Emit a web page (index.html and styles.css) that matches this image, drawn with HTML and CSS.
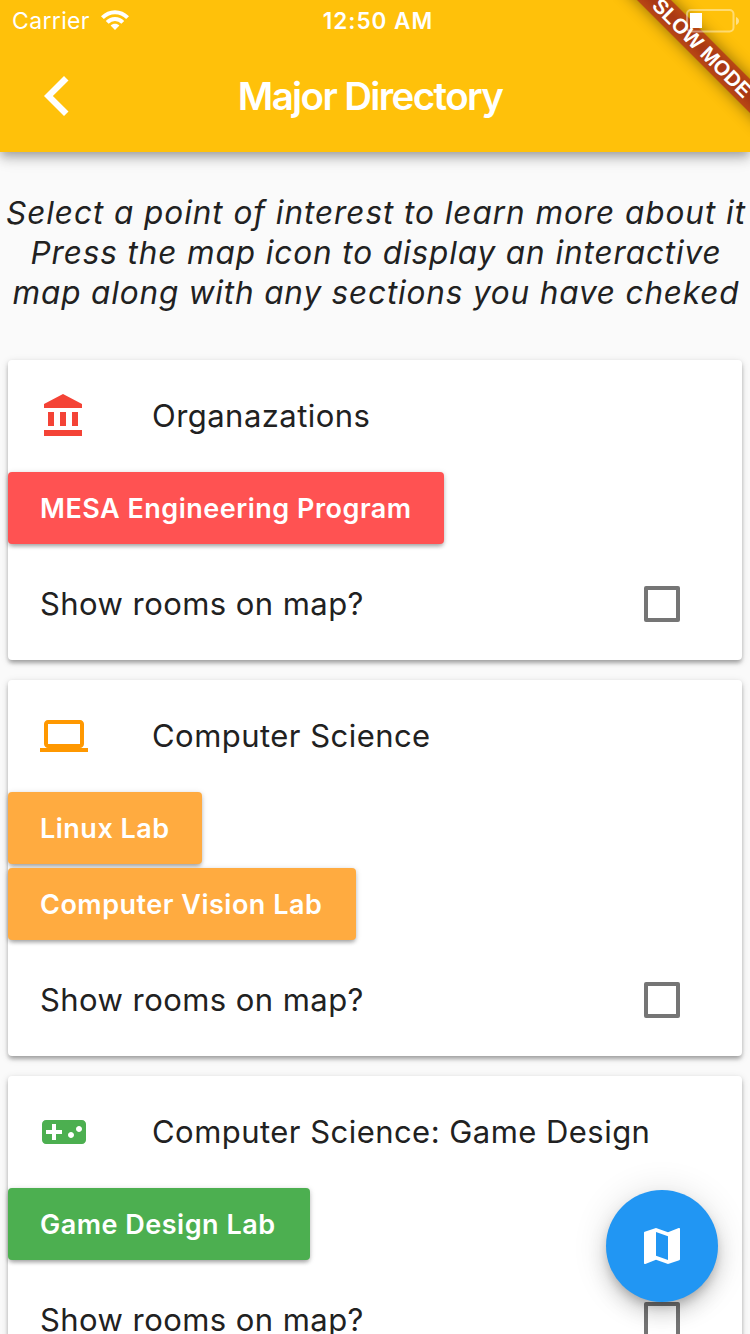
FILE: index.html
```html
<!DOCTYPE html>
<html lang="en">
<head>
<meta charset="utf-8">
<title>Major Directory</title>
<link rel="stylesheet" href="styles.css">
</head>
<body>
<div class="screen">
  <header class="app-bar">
    <div class="status-bar">
      <div class="network">
        <span class="carrier">Carrier</span>
        <svg class="wifi" viewBox="0 0 28 20" width="28" height="20"><g fill="none" stroke="#fff" stroke-width="4"><path d="M1.400 7.700C8.500.3 19.500.3 26.600 7.700"/><path d="M6.200 12.400c4.400-4.500 11.200-4.500 15.600 0"/></g><path d="M9.600 15.600c2.400-2.400 6.400-2.400 8.800 0L14 20z" fill="#fff"/></svg>
      </div>
      <span class="clock">12:50 AM</span>
    </div>
    <div class="toolbar">
      <svg class="back" viewBox="0 0 25 40" width="25" height="40"><path d="M20 0l4.500 4.400L8.900 20l15.600 15.600L20 40 0 20z" fill="#fff"/></svg>
      <h1 class="title">Major Directory</h1>
    </div>
  </header>

  <main class="content">
    <p class="intro"><span class="line-1">Select a point of interest to learn more about it</span><br><span class="line-2">Press the map icon to display an interactive</span><br><span class="line-3">map along with any sections you have cheked</span></p>

    <section class="card">
      <div class="tile">
        <svg class="icon red" viewBox="0 0 24 24"><path d="M4 10v7h3v-7H4zm6 0v7h3v-7h-3zM2 22h19v-3H2v3zm14-12v7h3v-7h-3zM11.500 1L2 6v2h19V6l-9.500-5z"/></svg>
        <h2 class="heading">Organazations</h2>
      </div>
      <div class="buttons">
        <button class="button mesa">MESA Engineering Program</button>
      </div>
      <label class="check-row"><span>Show rooms on map?</span><span class="checkbox"></span></label>
    </section>

    <section class="card">
      <div class="tile">
        <svg class="icon orange" viewBox="0 0 24 24"><path d="M20 18c1.100 0 1.990-.9 1.990-2L22 6c0-1.100-.9-2-2-2H4c-1.100 0-2 .9-2 2v10c0 1.100.9 2 2 2H0v2h24v-2h-4zM4 6h16v10H4V6z"/></svg>
        <h2 class="heading">Computer Science</h2>
      </div>
      <div class="buttons">
        <button class="button linux">Linux Lab</button>
        <button class="button vision">Computer Vision Lab</button>
      </div>
      <label class="check-row"><span>Show rooms on map?</span><span class="checkbox"></span></label>
    </section>

    <section class="card">
      <div class="tile">
        <svg class="icon green" viewBox="0 0 24 24"><path d="M21 6H3c-1.100 0-2 .9-2 2v8c0 1.100.9 2 2 2h18c1.100 0 2-.9 2-2V8c0-1.100-.9-2-2-2zm-10 7H8v3H6v-3H3v-2h3V8h2v3h3v2zm4.500 2c-.83 0-1.500-.67-1.500-1.500s.67-1.500 1.500-1.500 1.500.67 1.500 1.500-.67 1.500-1.500 1.500zm4-3c-.83 0-1.500-.67-1.500-1.500S18.670 9 19.500 9s1.500.67 1.500 1.500-.67 1.500-1.500 1.500z"/></svg>
        <h2 class="heading">Computer Science: Game Design</h2>
      </div>
      <div class="buttons">
        <button class="button game">Game Design Lab</button>
      </div>
      <label class="check-row"><span>Show rooms on map?</span><span class="checkbox"></span></label>
    </section>
  </main>

  <button class="fab" aria-label="Map"><svg viewBox="0 0 24 24" width="48" height="48"><path fill="#fff" d="M20.500 3l-.16.03L15 5.100 9 3 3.360 4.900c-.21.070-.36.250-.36.480V20.500c0 .28.220.5.500.5l.16-.03L9 18.900l6 2.100 5.640-1.900c.21-.07.36-.25.36-.48V3.500c0-.28-.22-.5-.5-.5zM15 19l-6-2.110V5l6 2.110V19z"/></svg></button>
  <div class="banner">SLOW MODE</div>
  <svg class="battery" viewBox="0 0 54 24" width="54" height="24"><rect x="1" y="1" width="46.500" height="21.500" rx="4" fill="none" stroke="#fff" stroke-opacity=".42" stroke-width="2"/><path d="M50 8c4 1.500 4 6.500 0 8z" fill="#fff" fill-opacity=".5"/><path d="M4 4h12v15H4z" fill="#fff"/></svg>
</div>
</body>
</html>
```
FILE: styles.css
```css
* { box-sizing: border-box; }

body {
  margin: 0;
  background: #fafafa;
  color: #212121;
  font-family: Inter, "Liberation Sans", sans-serif;
}

.screen {
  position: relative;
  width: 750px;
  height: 1334px;
  overflow: hidden;
}

/* App bar */
.app-bar {
  height: 152px;
  background: #ffc10a;
  box-shadow: 0 4px 8px -2px rgba(0, 0, 0, .2), 0 8px 10px rgba(0, 0, 0, .14), 0 2px 20px rgba(0, 0, 0, .12);
  color: #fff;
}

.status-bar {
  display: grid;
  grid-template-columns: 250px 256px 1fr;
  align-items: center;
  height: 40px;
}

.network {
  display: flex;
  align-items: center;
  gap: 12px;
  padding-left: 12px;
}

.carrier {
  width: 77px;
  padding-top: 2px;
  font-size: 23px;
  line-height: 38px;
  letter-spacing: .35px;
  white-space: nowrap;
}

.clock {
  padding-top: 2px;
  font-size: 22.500px;
  font-weight: 600;
  line-height: 38px;
  letter-spacing: 1px;
  text-align: center;
}

.toolbar {
  display: grid;
  grid-template-columns: 110px 520px 1fr;
  align-items: center;
  height: 112px;
}

.back { margin-left: 44px; }

.title {
  margin: 0;
  font-size: 38.500px;
  font-weight: 600;
  line-height: 48px;
  letter-spacing: -1.620px;
  text-align: center;
}

/* Content */
.content { padding: 41px 8px 0; }

.intro {
  margin: 0 -8px 47px;
  padding-left: 2px;
  font-size: 31.500px;
  font-style: italic;
  line-height: 40px;
  text-align: center;
  white-space: nowrap;
}

.line-1 { letter-spacing: .95px; }
.line-2 { letter-spacing: .9px; }
.line-3 { letter-spacing: .84px; }

.card {
  margin-bottom: 20px;
  border-radius: 4px;
  background: #fff;
  box-shadow: 0 4px 4px -1px rgba(0, 0, 0, .2), 0 2px 4px rgba(0, 0, 0, .14), 0 2px 8px rgba(0, 0, 0, .12);
}

.tile {
  display: flex;
  align-items: center;
  gap: 64px;
  height: 112px;
  padding: 0 32px;
}

.icon { width: 48px; height: 48px; }
.red { fill: #f44336; }
.orange { fill: #ff9800; }
.green { fill: #4caf50; }

.heading {
  margin: 0;
  font-size: 31px;
  font-weight: 400;
  line-height: 40px;
  letter-spacing: .46px;
  white-space: nowrap;
}

.buttons {
  display: flex;
  flex-direction: column;
  align-items: flex-start;
  gap: 4px;
}

.button {
  height: 72px;
  padding: 2px 0 0 32px;
  border: 0;
  border-radius: 4px;
  color: #fff;
  font: 600 27px/70px Inter, "Liberation Sans", sans-serif;
  letter-spacing: .5px;
  text-align: left;
  white-space: nowrap;
  box-shadow: 0 4px 4px -2px rgba(0, 0, 0, .2), 0 2px 4px rgba(0, 0, 0, .14), 0 1px 6px rgba(0, 0, 0, .12);
}

.mesa { width: 436px; background: #ff5252; }
.linux { width: 194px; background: #ffab40; }
.vision { width: 348px; background: #ffab40; }
.game { width: 302px; background: #4caf50; }

.check-row {
  display: flex;
  align-items: center;
  justify-content: space-between;
  height: 116px;
  padding: 4px 62px 0 32px;
  font-size: 31px;
  line-height: 40px;
  letter-spacing: .44px;
}

.checkbox {
  width: 36px;
  height: 36px;
  border: 4px solid #757575;
  border-radius: 2px;
}

/* Overlays */
.fab {
  position: absolute;
  right: 32px;
  bottom: 32px;
  display: grid;
  place-items: center;
  width: 112px;
  height: 112px;
  padding: 0;
  border: 0;
  border-radius: 50%;
  background: #2196f3;
  box-shadow: 0 6px 10px -2px rgba(0, 0, 0, .2), 0 12px 20px rgba(0, 0, 0, .14), 0 2px 36px rgba(0, 0, 0, .12);
}

.banner {
  position: absolute;
  top: 36px;
  left: 602px;
  width: 200px;
  height: 24px;
  transform: rotate(45deg);
  background: linear-gradient(#b94814, #aa3914 40%, #aa3914 60%, #b94814);
  box-shadow: 0 0 16px rgba(0, 0, 0, .45);
  color: #fff;
  font-family: "Liberation Sans", sans-serif;
  font-size: 20.800px;
  font-weight: 700;
  line-height: 24px;
  text-align: center;
}

.battery {
  position: absolute;
  top: 9px;
  left: 686px;
}
```
